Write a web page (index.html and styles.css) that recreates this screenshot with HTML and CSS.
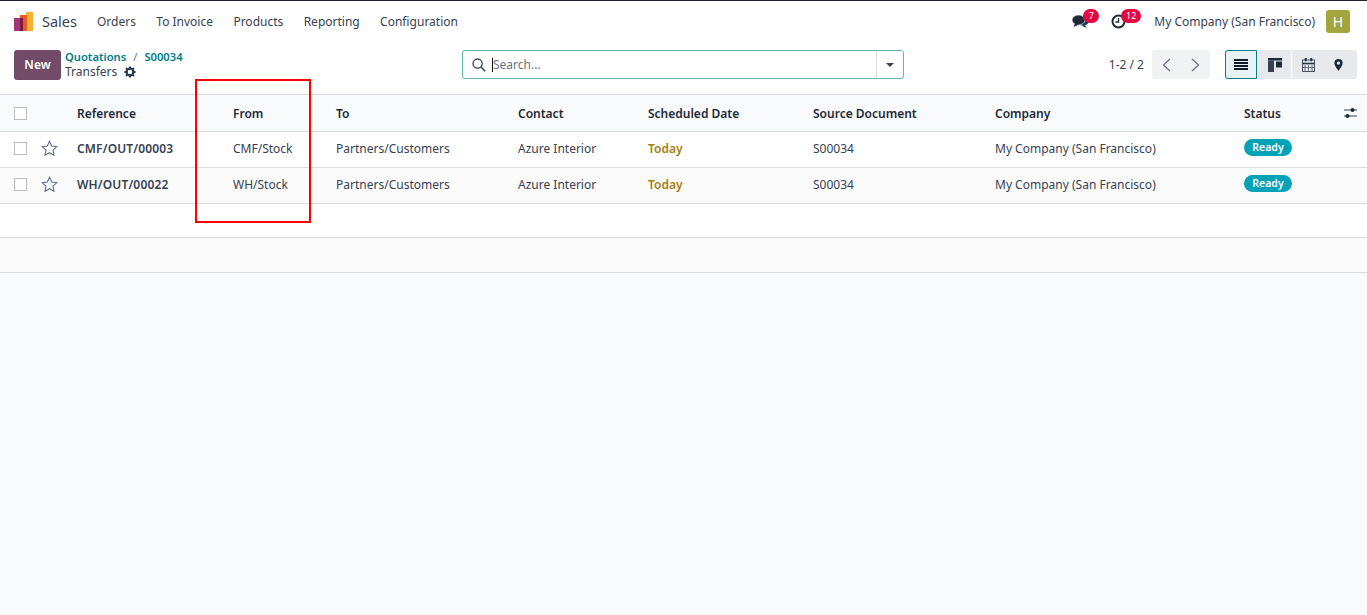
FILE: index.html
```html
<!DOCTYPE html>
<html lang="en">
<head>
    <meta charset="UTF-8">
    <title>Transfers</title>
    <link rel="stylesheet" href="styles.css">
</head>
<body>
    <nav class="navbar">
        <svg class="app-logo" width="19" height="19" viewBox="0 0 19 19">
            <rect x="0" y="6" width="7" height="13" fill="#a3357a"/>
            <rect x="6" y="3" width="7" height="16" fill="#f0562b"/>
            <rect x="6" y="6" width="3" height="13" fill="#7d1d3f"/>
            <rect x="12" y="0" width="7" height="19" fill="#fbb130"/>
            <rect x="12" y="3" width="1" height="16" fill="#d9661f"/>
        </svg>
        <span class="app-name">Sales</span>
        <a class="menu-item">Orders</a>
        <a class="menu-item">To Invoice</a>
        <a class="menu-item">Products</a>
        <a class="menu-item">Reporting</a>
        <a class="menu-item">Configuration</a>
        <div class="nav-right">
            <span class="systray chat">
                <svg width="17" height="14" viewBox="0 0 17 14">
                    <ellipse cx="11" cy="7" rx="6" ry="4.5" fill="#1f3a5f"/>
                    <path d="M12 10l3 4-5-2z" fill="#1f3a5f"/>
                    <ellipse cx="6.5" cy="6" rx="6.5" ry="5" fill="#1f2937" stroke="#fff" stroke-width=".6"/>
                    <path d="M3 9.5L1.5 13 7 10.5z" fill="#1f2937"/>
                </svg>
                <span class="badge badge-chat">7</span>
            </span>
            <span class="systray clock">
                <svg width="15" height="15" viewBox="0 0 15 15">
                    <circle cx="7.5" cy="7.5" r="6" fill="none" stroke="#1f2937" stroke-width="2"/>
                    <path d="M7.5 4v4H4.5" fill="none" stroke="#1f2937" stroke-width="1.4"/>
                </svg>
                <span class="badge badge-clock">12</span>
            </span>
            <span class="company">My Company (San Francisco)</span>
            <span class="avatar">H</span>
        </div>
    </nav>

    <div class="control-panel">
        <div class="cp-left">
            <button class="btn-new">New</button>
            <div class="breadcrumb">
                <div class="crumbs"><a>Quotations</a><span class="sep">/</span><a>S00034</a></div>
                <div class="current">Transfers
                    <svg class="gear" width="12" height="12" viewBox="0 0 12 12">
                        <circle cx="6" cy="6" r="3.4" fill="none" stroke="#2b3a55" stroke-width="2.2"/>
                        <path d="M6 .4v2M6 9.6v2M.4 6h2M9.6 6h2M2 2l1.4 1.4M8.6 8.6L10 10M2 10l1.4-1.4M8.6 3.4L10 2" stroke="#2b3a55" stroke-width="2"/>
                    </svg>
                </div>
            </div>
        </div>
        <div class="search-box">
            <svg class="search-icon" width="14" height="14" viewBox="0 0 14 14">
                <circle cx="5.6" cy="5.6" r="4.6" fill="none" stroke="#374151" stroke-width="1.3"/>
                <path d="M9 9l4.2 4.2" stroke="#374151" stroke-width="1.5"/>
            </svg>
            <span class="caret-line"></span>
            <span class="search-text">Search...</span>
            <span class="search-drop"><span class="tri"></span></span>
        </div>
        <div class="cp-right">
            <span class="pager-text">1-2 / 2</span>
            <div class="pager">
                <button class="pager-btn">
                    <svg width="9" height="14" viewBox="0 0 9 14"><path d="M8 1L1.5 7 8 13" fill="none" stroke="#6b7280" stroke-width="1.3"/></svg>
                </button>
                <button class="pager-btn">
                    <svg width="9" height="14" viewBox="0 0 9 14"><path d="M1 1l6.500 6L1 13" fill="none" stroke="#6b7280" stroke-width="1.3"/></svg>
                </button>
            </div>
            <div class="views">
                <button class="view-btn active">
                    <svg width="14" height="11" viewBox="0 0 14 11"><path d="M0 1h14M0 4h14M0 7h14M0 10h14" stroke="#111827" stroke-width="1.8"/></svg>
                </button>
                <button class="view-btn kanban">
                    <svg width="14" height="14" viewBox="0 0 14 14"><rect width="14" height="2.500" fill="#1f2937"/><rect y="2.500" width="6" height="11.500" fill="#374151"/><rect x="8" y="3.500" width="6" height="6" fill="#1f2937"/></svg>
                </button>
                <button class="view-btn calendar">
                    <svg width="13" height="14" viewBox="0 0 13 14"><rect x=".5" y="2" width="12" height="11.500" fill="none" stroke="#4b5563"/><path d="M0 5h13v1H0zM3 0h1.500v3H3zM8.500 0H10v3H8.500zM3 7v6M6.500 7v6M10 7v6M1 9.500h11" stroke="#4b5563" stroke-width=".8"/></svg>
                </button>
                <button class="view-btn map">
                    <svg width="9" height="12" viewBox="0 0 10 14"><path d="M5 0a4.800 4.800 0 0 0-4.800 4.800C.2 8 5 14 5 14s4.800-6 4.800-9.200A4.800 4.800 0 0 0 5 0zm0 6.800a2 2 0 1 1 0-4 2 2 0 0 1 0 4z" fill="#1f2937"/></svg>
                </button>
            </div>
        </div>
    </div>

    <table class="list">
        <colgroup>
            <col class="c-check"><col class="c-star"><col class="c-ref"><col class="c-from"><col class="c-to">
            <col class="c-contact"><col class="c-date"><col class="c-source"><col class="c-company"><col class="c-status"><col class="c-opt">
        </colgroup>
        <thead>
            <tr>
                <th><span class="check"></span></th>
                <th></th>
                <th>Reference</th>
                <th>From</th>
                <th>To</th>
                <th>Contact</th>
                <th>Scheduled Date</th>
                <th>Source Document</th>
                <th>Company</th>
                <th>Status</th>
                <th>
                    <svg class="opt-icon" width="13" height="12" viewBox="0 0 13 12"><path d="M0 3h13M0 9h13" stroke="#374151" stroke-width="1.2"/><circle cx="8.500" cy="3" r="2" fill="#1f2937"/><circle cx="3.500" cy="9" r="2" fill="#1f2937"/></svg>
                </th>
            </tr>
        </thead>
        <tbody>
            <tr>
                <td><span class="check"></span></td>
                <td><svg class="star" width="17" height="16" viewBox="0 0 17 16"><path d="M8.500 1.300l2.200 4.700 5 .6-3.700 3.500 1 5.100-4.500-2.500-4.500 2.500 1-5.100L1.300 6.600l5-.6z" fill="none" stroke="#5f6f86" stroke-width="1.100"/></svg></td>
                <td class="ref">CMF/OUT/00003</td>
                <td>CMF/Stock</td>
                <td>Partners/Customers</td>
                <td>Azure Interior</td>
                <td class="today">Today</td>
                <td>S00034</td>
                <td>My Company (San Francisco)</td>
                <td class="status-cell"><span class="status">Ready</span></td>
                <td></td>
            </tr>
            <tr>
                <td><span class="check"></span></td>
                <td><svg class="star" width="17" height="16" viewBox="0 0 17 16"><path d="M8.500 1.300l2.200 4.700 5 .6-3.700 3.500 1 5.100-4.500-2.500-4.500 2.500 1-5.100L1.300 6.600l5-.6z" fill="none" stroke="#5f6f86" stroke-width="1.100"/></svg></td>
                <td class="ref">WH/OUT/00022</td>
                <td>WH/Stock</td>
                <td>Partners/Customers</td>
                <td>Azure Interior</td>
                <td class="today">Today</td>
                <td>S00034</td>
                <td>My Company (San Francisco)</td>
                <td class="status-cell"><span class="status">Ready</span></td>
                <td></td>
            </tr>
            <tr class="empty first"><td colspan="11"></td></tr>
            <tr class="empty second"><td colspan="11"></td></tr>
        </tbody>
    </table>

    <div class="highlight"></div>
</body>
</html>
```

FILE: styles.css
```css
* {
    box-sizing: border-box;
}
body {
    margin: 0;
    height: 615px;
    overflow: hidden;
    background: #f9fafb;
    color: #374151;
    font-family: "Noto Sans", "Open Sans", sans-serif;
    font-size: 12px;
    position: relative;
}
button {
    font-family: inherit;
    border: none;
}
.navbar {
    height: 41px;
    background: #fff;
    border-top: 1px solid #1f2329;
    display: flex;
    align-items: center;
    padding: 0 17px 0 14px;
}
.app-logo {
    margin-right: 9px;
}
.app-name {
    font-size: 14.5px;
    color: #374151;
    margin-right: 20px;
}
.menu-item {
    margin-right: 20.4px;
    color: #374151;
}
.nav-right {
    margin-left: auto;
    display: flex;
    align-items: center;
}
.systray {
    position: relative;
    display: flex;
    align-items: center;
}
.chat {
    margin-right: 22px;
}
.clock {
    margin-right: 28px;
}
.badge {
    position: absolute;
    top: -5px;
    background: #e4063f;
    color: #fff;
    font-size: 9px;
    line-height: 14px;
    height: 14px;
    border-radius: 7px;
    text-align: center;
}
.badge-chat {
    left: 11px;
    width: 16px;
}
.badge-clock {
    left: 10px;
    width: 20px;
}
.company {
    margin-right: 11px;
}
.avatar {
    width: 24px;
    height: 23px;
    background: #a2a63c;
    color: #fff;
    border-radius: 3px;
    font-size: 14px;
    display: flex;
    align-items: center;
    justify-content: center;
}
.control-panel {
    height: 54px;
    background: #fff;
    border-bottom: 1px solid #d8dadd;
    position: relative;
    display: flex;
    align-items: flex-start;
    justify-content: space-between;
    padding: 9px 14px 0 14px;
}
.cp-left {
    display: flex;
    align-items: flex-start;
}
.btn-new {
    width: 47px;
    height: 30px;
    background: #714b67;
    color: #fff;
    font-weight: 600;
    font-size: 12px;
    border-radius: 3px;
    padding: 0 0 2px;
    margin-right: 4px;
}
.breadcrumb {
    line-height: 15px;
    margin-top: -1px;
}
.crumbs {
    font-weight: 600;
    font-size: 11.2px;
    color: #017e84;
}
.sep {
    font-weight: 400;
    color: #6b7280;
    margin: 0 7px;
}
.current {
    display: flex;
    align-items: center;
    color: #374151;
}
.gear {
    margin-left: 7px;
}
.search-box {
    position: absolute;
    left: 462px;
    top: 9px;
    width: 442px;
    height: 29px;
    border: 1px solid #5fb5b5;
    border-radius: 3px;
    display: flex;
    align-items: center;
    padding-left: 9px;
}
.caret-line {
    width: 1px;
    height: 14px;
    background: #111;
    margin-left: 6px;
}
.search-text {
    color: #6b7280;
}
.search-drop {
    margin-left: auto;
    width: 27px;
    height: 100%;
    border-left: 1px solid #d8dadd;
    display: flex;
    align-items: center;
    justify-content: center;
}
.tri {
    border-left: 4px solid transparent;
    border-right: 4px solid transparent;
    border-top: 4px solid #374151;
}
.cp-right {
    display: flex;
    align-items: center;
    margin-left: auto;
    margin-right: -4px;
}
.pager-text {
    margin-right: 8px;
}
.pager {
    display: flex;
    background: #f1f2f4;
    border-radius: 3px;
    margin-right: 15px;
}
.pager-btn {
    width: 29px;
    height: 29px;
    background: none;
    padding: 0;
    display: flex;
    align-items: center;
    justify-content: center;
}
.views {
    display: flex;
}
.view-btn {
    width: 33px;
    height: 29px;
    background: #e7e9ed;
    padding: 0;
    display: flex;
    align-items: center;
    justify-content: center;
}
.view-btn.kanban {
    margin: 0 1px;
}
.view-btn.map {
    width: 32px;
    padding-right: 6px;
    border-radius: 0 3px 3px 0;
}
.view-btn.active {
    width: 32px;
    background: #e6f2f3;
    border: 1px solid #017e84;
    border-radius: 3px 0 0 3px;
}
.list {
    width: 1367px;
    border-collapse: collapse;
    table-layout: fixed;
    background: #fff;
}
.c-check { width: 41px; }
.c-star { width: 28px; }
.c-ref { width: 156px; }
.c-from { width: 103px; }
.c-to { width: 182px; }
.c-contact { width: 130px; }
.c-date { width: 165px; }
.c-source { width: 182px; }
.c-company { width: 249px; }
.c-status { width: 93px; }
.c-opt { width: 38px; }
th, td {
    padding: 0 8px;
    text-align: left;
    white-space: nowrap;
    border-bottom: 1px solid #d8dadd;
}
th {
    height: 36px;
    padding-top: 1px;
    background: #f9fafb;
    color: #1f2937;
    font-weight: 600;
}
td {
    height: 36px;
    padding-bottom: 1px;
}
tbody tr:nth-child(2) {
    background: #fbfbfc;
}
th:first-child, td:first-child {
    padding: 0 0 1px 14px;
}
th:first-child {
    padding: 1px 0 0 14px;
}
th:nth-child(2), td:nth-child(2) {
    padding: 0 0 2px;
}
.check {
    display: block;
    width: 13px;
    height: 13px;
    border: 1px solid #bdbdbd;
    background: #fff;
}
.star {
    display: block;
}
.ref {
    font-weight: 600;
    color: #374151;
    letter-spacing: .15px;
}
.today {
    font-weight: 600;
    color: #a6800f;
}
.status-cell {
    padding-bottom: 4px;
}
.status {
    display: inline-block;
    width: 48px;
    height: 17px;
    line-height: 17px;
    text-align: center;
    background: #00a2b8;
    color: #fff;
    border-radius: 9px;
    font-size: 10.5px;
    font-weight: 600;
}
.opt-icon {
    display: block;
    margin-left: 7px;
}
.empty.first td {
    height: 34px;
    background: #fff;
}
.empty.second td {
    height: 35px;
    background: #fbfbfc;
}
.highlight {
    position: absolute;
    left: 195px;
    top: 79px;
    width: 116px;
    height: 144px;
    border: 2px solid #f00;
    pointer-events: none;
}
```
